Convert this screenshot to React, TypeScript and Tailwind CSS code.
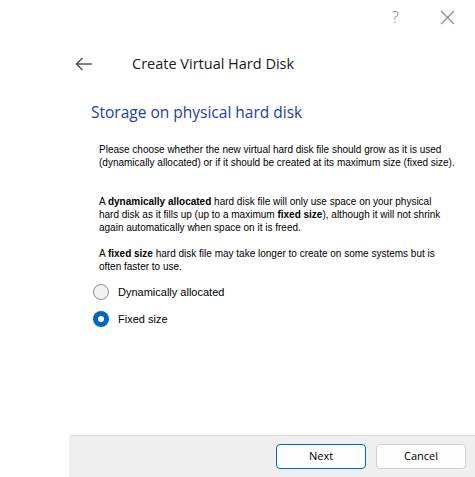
import React, { useState } from 'react';

const ui = { fontFamily: '"Segoe UI", "Open Sans", "Noto Sans", sans-serif' };
const body = { fontFamily: '"Liberation Sans", Arial, sans-serif' };

const Radio = ({ checked, label, onClick }: { checked: boolean; label: string; onClick: () => void }) => (
  <button type="button" onClick={onClick} className="flex items-center h-[16px] text-[11px] text-black" style={body}>
    {checked ? (
      <span className="w-[16px] h-[16px] rounded-full bg-[#0067c0] flex items-center justify-center">
        <span className="w-[6px] h-[6px] rounded-full bg-white" />
      </span>
    ) : (
      <span className="w-[16px] h-[16px] rounded-full border border-[#8a8a8a] bg-[#f3f3f3]" />
    )}
    <span className="ml-[9px]">{label}</span>
  </button>
);

export default function App() {
  const [fixed, setFixed] = useState(true);

  return (
    <div className="flex w-[475px] h-[477px] bg-white overflow-hidden">
      <div className="w-[69px] shrink-0" />
      <div className="flex flex-col flex-1">
        {/* title bar */}
        <div className="flex justify-end items-center h-[34px] text-[#8a8a8a]">
          <span className="text-[17px] font-light mr-[41px]" style={ui}>?</span>
          <svg width="15" height="15" viewBox="0 0 15 15" className="mr-[20px]">
            <path d="M1 1L14 14M14 1L1 14" stroke="#8a8a8a" strokeWidth="1.1" />
          </svg>
        </div>

        {/* header */}
        <div className="flex items-center h-[30px] mt-[15px]">
          <svg width="18" height="14" viewBox="0 0 18 14" className="ml-[6px]">
            <path d="M17 7H1.5M7.5 1L1.5 7l6 6" stroke="#555" strokeWidth="1.6" fill="none" />
          </svg>
          <span className="ml-[39px] text-[14.5px] text-[#1a1a1a]" style={ui}>Create Virtual Hard Disk</span>
        </div>

        <h2 className="ml-[22px] mt-[23px] text-[15.5px] text-[#1a3fa6] leading-[20px]" style={ui}>
          Storage on physical hard disk
        </h2>

        <div className="ml-[30px] text-[10px] leading-[13px] text-black whitespace-nowrap" style={body}>
          <p className="mt-[21px]">
            Please choose whether the new virtual hard disk file should grow as it is used
            <br />
            (dynamically allocated) or if it should be created at its maximum size (fixed size).
          </p>
          <p className="mt-[26px]">
            A <b>dynamically allocated</b> hard disk file will only use space on your physical
            <br />
            hard disk as it fills up (up to a maximum <b>fixed size</b>), although it will not shrink
            <br />
            again automatically when space on it is freed.
          </p>
          <p className="mt-[13px]">
            A <b>fixed size</b> hard disk file may take longer to create on some systems but is
            <br />
            often faster to use.
          </p>
        </div>

        <div className="ml-[24px] mt-[11px] flex flex-col gap-[11px]">
          <Radio checked={!fixed} label="Dynamically allocated" onClick={() => setFixed(false)} />
          <Radio checked={fixed} label="Fixed size" onClick={() => setFixed(true)} />
        </div>

        <div className="mt-auto h-[42px] bg-[#efefef] border-t border-[#dcdcdc] flex items-center justify-end gap-[10px] pr-[9px]">
          <button type="button" className="w-[90px] h-[25px] rounded-[4px] border border-[#0067c0] bg-[#fdfdfd] text-[11px] text-black" style={ui}>
            Next
          </button>
          <button type="button" className="w-[90px] h-[25px] rounded-[4px] border border-[#d0d0d0] bg-[#fdfdfd] text-[11px] text-black" style={ui}>
            Cancel
          </button>
        </div>
      </div>
    </div>
  );
}
